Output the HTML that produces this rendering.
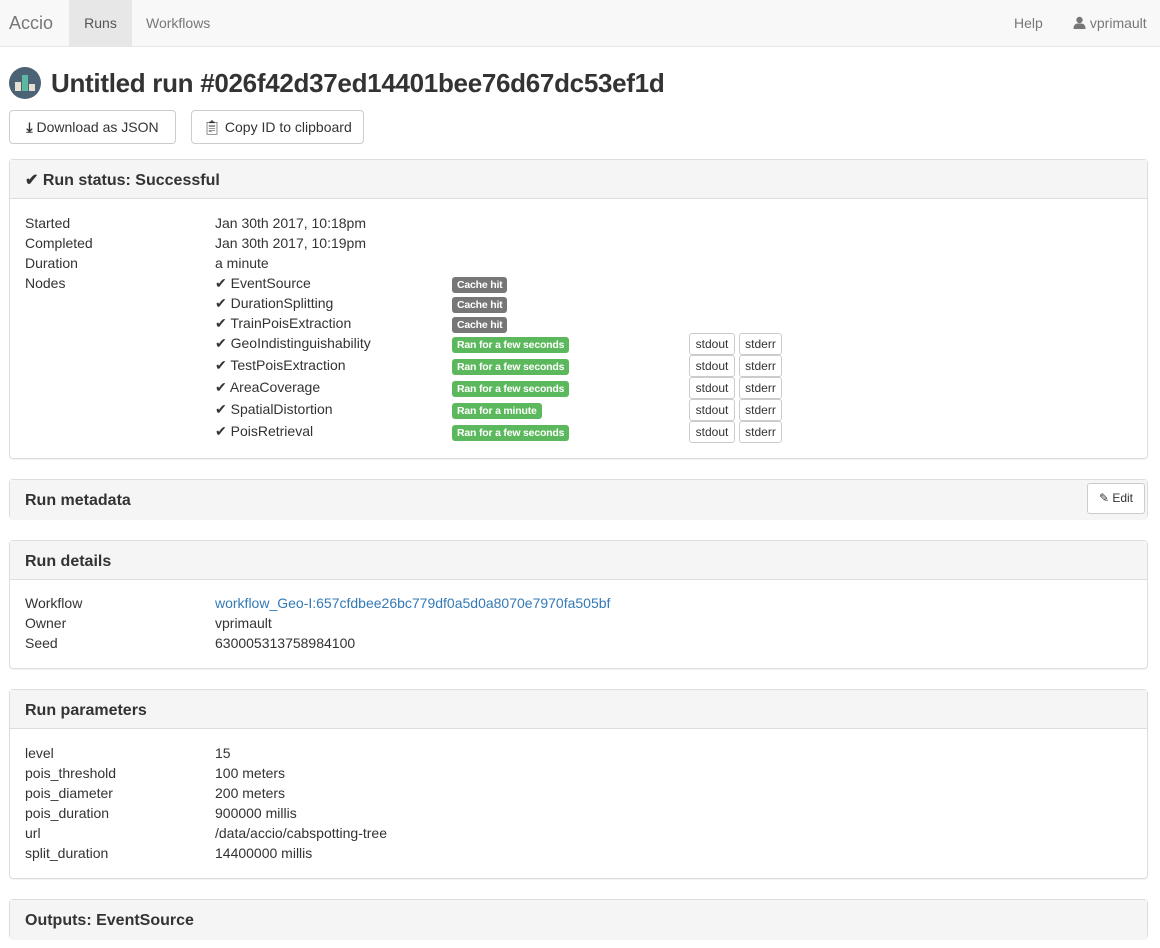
<!DOCTYPE html>
<html><head><meta charset="utf-8"><style>
*{box-sizing:border-box;margin:0;padding:0}
body{width:1160px;height:948px;overflow:hidden;background:#fff;font-family:"Liberation Sans",Helvetica,Arial,sans-serif;font-size:14px;color:#333;position:relative}
.nav{position:absolute;left:0;top:0;width:1160px;height:47px;background:#f8f8f8;border-bottom:1px solid #e7e7e7}
.nav span{position:absolute;top:0;line-height:46px;color:#777}
.a{position:absolute}
.btn{position:absolute;border:1px solid #ccc;border-radius:4px;background:#fff;color:#333;line-height:33px;text-align:center}
.panel{position:absolute;left:9px;width:1139px;border:1px solid #ddd;border-radius:4px;box-shadow:0 1px 1px rgba(0,0,0,.05)}
.ph{height:39px;background:#f5f5f5;border-bottom:1px solid #ddd;padding-left:15px;line-height:41px;font-size:16px;font-weight:bold;color:#333}
.row{position:absolute;left:15px;height:20px;line-height:20px}
.row .v{position:absolute;left:190px;white-space:nowrap}
.badge{position:absolute;left:442px;height:16px;line-height:16px;font-size:10.5px;font-weight:bold;color:#fff;padding:0 5px;border-radius:3px;letter-spacing:-0.2px}
.g{background:#5cb85c}.k{background:#777}
.sb{position:absolute;height:22px;line-height:20px;font-size:12px;border:1px solid #ccc;border-radius:3px;background:#fff;text-align:center}
</style></head><body>
<div class="nav">
<span style="left:9px;font-size:18px;color:#777">Accio</span>
<span style="left:69px;width:63px;background:#e7e7e7;color:#555;text-align:center">Runs</span>
<span style="left:146px">Workflows</span>
<span style="left:1014px">Help</span>
<span style="left:1073px"><svg width="13" height="13" viewBox="0 0 13 13" style="vertical-align:-1px"><circle cx="6.5" cy="4" r="3.2" fill="#777"/><path d="M0.5 13 C0.5 8 3 7.5 6.5 7.5 C10 7.5 12.5 8 12.5 13Z" fill="#777"/></svg> vprimault</span>
</div>
<svg class="a" style="left:9px;top:67px" width="32" height="32" viewBox="0 0 32 32"><circle cx="16" cy="16" r="16" fill="#4c6275"/><rect x="6" y="15" width="6" height="9" fill="#e5e0d2"/><rect x="13" y="8" width="6" height="16" fill="#5cb8a0"/><rect x="20" y="17" width="6" height="7" fill="#e5e0d2"/></svg>
<div class="a" style="left:51px;top:66px;font-size:26px;font-weight:bold;line-height:34px;color:#333;letter-spacing:-0.3px">Untitled run #026f42d37ed14401bee76d67dc53ef1d</div>
<div class="btn" style="left:9px;top:110px;width:167px;height:34px"><b>&#x2913;</b> Download as JSON</div>
<div class="btn" style="left:191px;top:110px;width:173px;height:34px">&#x1F4CB;&#xFE0E; Copy ID to clipboard</div>

<div class="panel" style="top:159px;height:300px">
<div class="ph">✔ Run status: Successful</div>
<div class="row" style="top:53px">Started<span class="v">Jan 30th 2017, 10:18pm</span></div>
<div class="row" style="top:73px">Completed<span class="v">Jan 30th 2017, 10:19pm</span></div>
<div class="row" style="top:93px">Duration<span class="v">a minute</span></div>
<div class="row" style="top:113px">Nodes<span class="v">✔ EventSource</span></div>
<div class="row" style="top:133px"><span class="v">✔ DurationSplitting</span></div>
<div class="row" style="top:153px"><span class="v">✔ TrainPoisExtraction</span></div>
<div class="row" style="top:173px"><span class="v">✔ GeoIndistinguishability</span></div>
<div class="row" style="top:195px"><span class="v">✔ TestPoisExtraction</span></div>
<div class="row" style="top:217px"><span class="v">✔ AreaCoverage</span></div>
<div class="row" style="top:239px"><span class="v">✔ SpatialDistortion</span></div>
<div class="row" style="top:261px"><span class="v">✔ PoisRetrieval</span></div>
<span class="badge k" style="top:117px">Cache hit</span>
<span class="badge k" style="top:137px">Cache hit</span>
<span class="badge k" style="top:157px">Cache hit</span>
<span class="badge g" style="top:177px">Ran for a few seconds</span>
<span class="badge g" style="top:199px">Ran for a few seconds</span>
<span class="badge g" style="top:221px">Ran for a few seconds</span>
<span class="badge g" style="top:243px">Ran for a minute</span>
<span class="badge g" style="top:265px">Ran for a few seconds</span>
<div class="sb" style="left:679px;top:173px;width:46px">stdout</div><div class="sb" style="left:729px;top:173px;width:43px">stderr</div>
<div class="sb" style="left:679px;top:195px;width:46px">stdout</div><div class="sb" style="left:729px;top:195px;width:43px">stderr</div>
<div class="sb" style="left:679px;top:217px;width:46px">stdout</div><div class="sb" style="left:729px;top:217px;width:43px">stderr</div>
<div class="sb" style="left:679px;top:239px;width:46px">stdout</div><div class="sb" style="left:729px;top:239px;width:43px">stderr</div>
<div class="sb" style="left:679px;top:261px;width:46px">stdout</div><div class="sb" style="left:729px;top:261px;width:43px">stderr</div>
</div>

<div class="panel" style="top:479px;height:40px">
<div class="ph" style="border-bottom:0">Run metadata</div>
<div class="sb" style="left:1077px;top:3px;width:58px;height:31px;line-height:29px">✎ Edit</div>
</div>

<div class="panel" style="top:540px;height:129px">
<div class="ph">Run details</div>
<div class="row" style="top:52px">Workflow<span class="v" style="color:#337ab7">workflow_Geo-I:657cfdbee26bc779df0a5d0a8070e7970fa505bf</span></div>
<div class="row" style="top:72px">Owner<span class="v">vprimault</span></div>
<div class="row" style="top:92px">Seed<span class="v">630005313758984100</span></div>
</div>

<div class="panel" style="top:689px;height:190px">
<div class="ph">Run parameters</div>
<div class="row" style="top:53px">level<span class="v">15</span></div>
<div class="row" style="top:73px">pois_threshold<span class="v">100 meters</span></div>
<div class="row" style="top:93px">pois_diameter<span class="v">200 meters</span></div>
<div class="row" style="top:113px">pois_duration<span class="v">900000 millis</span></div>
<div class="row" style="top:133px">url<span class="v">/data/accio/cabspotting-tree</span></div>
<div class="row" style="top:153px">split_duration<span class="v">14400000 millis</span></div>
</div>

<div class="panel" style="top:899px;height:40px">
<div class="ph" style="border-bottom:0">Outputs: EventSource</div>
</div>
</body></html>
